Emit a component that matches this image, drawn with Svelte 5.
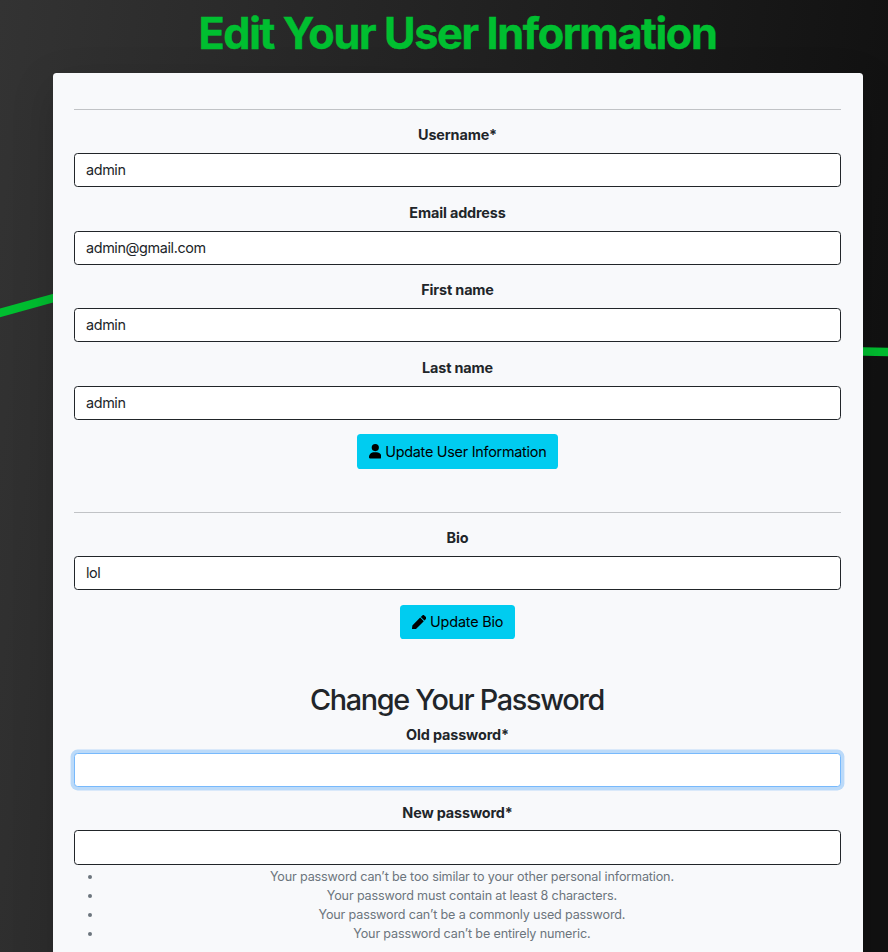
<script>
  const account = [
    { id: 'username', label: 'Username*', value: 'admin' },
    { id: 'email', label: 'Email address', value: 'admin@gmail.com' },
    { id: 'first', label: 'First name', value: 'admin' },
    { id: 'last', label: 'Last name', value: 'admin' }
  ];
  const hints = [
    'Your password can’t be too similar to your other personal information.',
    'Your password must contain at least 8 characters.',
    'Your password can’t be a commonly used password.',
    'Your password can’t be entirely numeric.'
  ];
</script>

{#snippet field(id, label, value, type = 'text', focused = false)}
  <div class="field">
    <label for={id}>{label}</label>
    <input {id} {type} {value} class:focused />
  </div>
{/snippet}

<div class="page">
  <svg class="trend" viewBox="0 0 888 952" aria-hidden="true">
    <path d="M-10 315.7 L70 293.5 M840 351 L900 352.2" />
  </svg>
  <h1>Edit Your User Information</h1>
  <main class="card">
    <hr />
    {#each account as f}
      {@render field(f.id, f.label, f.value)}
    {/each}
    <div class="action">
      <button>
        <svg class="person" viewBox="0 0 448 512" aria-hidden="true"><path d="M224 256A128 128 0 1 0 224 0a128 128 0 1 0 0 256zm-50 36C75 292 0 372 0 470 0 494 14 512 34 512h380c20 0 34-18 34-42 0-98-75-178-174-178z" /></svg>
        <span>Update User Information</span>
      </button>
    </div>
    <hr class="second" />
    {@render field('bio', 'Bio', 'lol')}
    <div class="action">
      <button class="short">
        <svg class="pencil" viewBox="0 0 512 512" aria-hidden="true"><path d="M290.74 93.24l128.02 128.02-277.99 277.99-114.14 12.6C11.35 513.54-1.56 500.62.14 485.34l12.7-114.22 277.9-277.88zm207.2-19.06l-60.11-60.11c-18.75-18.75-49.16-18.75-67.91 0l-56.55 56.55 128.02 128.02 56.55-56.55c18.75-18.76 18.75-49.16 0-67.91z" /></svg>
        <span>Update Bio</span>
      </button>
    </div>
    <h2>Change Your Password</h2>
    {@render field('old', 'Old password*', '', 'password', true)}
    {@render field('new', 'New password*', '', 'password')}
    <ul>
      {#each hints as hint}
        <li>{hint}</li>
      {/each}
    </ul>
  </main>
</div>

<style>
  :global(body) { margin: 0; background: #111; overflow: hidden; }
  .page {
    box-sizing: border-box;
    position: relative;
    height: 952px;
    overflow: hidden;
    padding: 8px 25px 0 53px;
    background: linear-gradient(97deg, #333 0%, #111 92%);
    font-family: Inter, "Liberation Sans", sans-serif;
    font-size: 14.4px;
    line-height: 21.6px;
    color: #212529;
    text-align: center;
  }
  .trend { position: absolute; inset: 0; width: 888px; height: 952px; }
  .trend path { fill: none; stroke: #00bf30; stroke-width: 8.4; }
  h1 {
    position: relative;
    margin: 0;
    height: 65px;
    font-size: 43.2px;
    line-height: 51px;
    font-weight: 700;
    letter-spacing: -1.37px;
    text-indent: -1px;
    -webkit-text-stroke: .5px #00bf30;
    white-space: nowrap;
    color: #00bf30;
  }
  .card {
    box-sizing: border-box;
    position: relative;
    height: 1000px;
    padding: 36px 22px 0 21px;
    border-radius: 3.6px;
    background: #f8f9fb;
    box-shadow: 0 14px 42px rgba(0, 0, 0, .18);
  }
  hr { height: 1px; margin: 0 0 14.2px; border: 0; background: #c1c3c6; }
  .second { margin: 43.4px 0 14px; }
  .field { height: 77.6px; }
  label {
    display: block;
    height: 28.8px;
    font-weight: 700;
    letter-spacing: -.14px;
  }
  input {
    box-sizing: border-box;
    display: block;
    width: 100%;
    height: 34.2px;
    padding: 0 11px 1px;
    border: 1px solid #212529;
    border-radius: 3.6px;
    background: #fff;
    color: #212529;
    font: inherit;
    letter-spacing: -.38px;
    outline: 0;
  }
  .focused { border-color: #77b9fc; box-shadow: 0 0 0 3.4px #bbdaf9; }
  .action { display: flex; justify-content: center; height: 34.4px; margin-top: -.2px; }
  button {
    display: flex;
    align-items: center;
    height: 34.4px;
    padding: 0 12px;
    border: 0;
    border-radius: 3.6px;
    background: #00ccf0;
    color: #000;
    font: inherit;
    letter-spacing: -.26px;
    white-space: nowrap;
  }
  .short { letter-spacing: -.17px; }
  .person { width: 12.6px; height: 14.4px; margin-right: 4px; }
  .pencil { width: 14.4px; height: 14.4px; margin-right: 4px; }
  h2 {
    margin: 43.6px 0 6.8px;
    font-size: 28.8px;
    line-height: 34.6px;
    font-weight: 500;
    letter-spacing: -1.32px;
    text-indent: -1px;
  }
  ul {
    margin: -11px 0 0;
    padding-left: 28.8px;
    color: #6c757d;
    font-size: 12.6px;
    line-height: 18.95px;
    letter-spacing: -.155px;
  }
</style>
